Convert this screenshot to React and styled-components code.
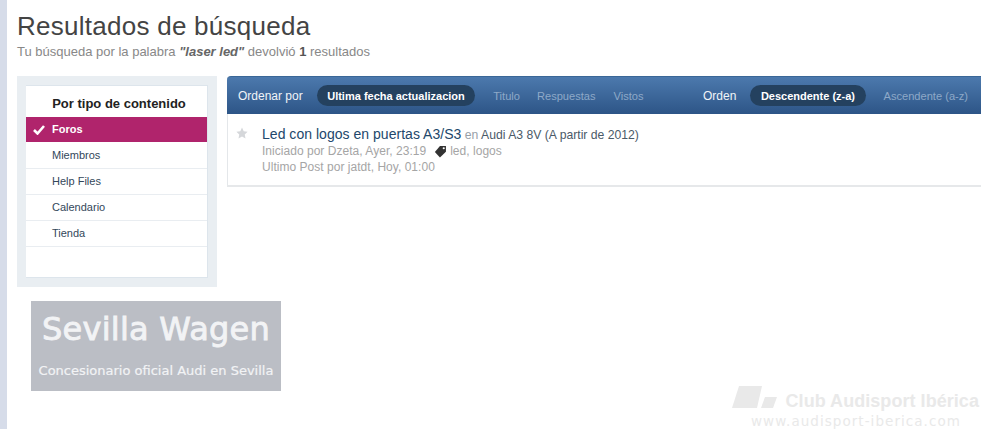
import React from "react";
import styled, { createGlobalStyle } from "styled-components";

const GlobalStyle = createGlobalStyle`
    html, body {
        margin: 0;
        padding: 0;
        background: #fff;
        overflow: hidden;
    }
    body {
        font-family: "Liberation Sans", Arial, sans-serif;
    }
`;

const Page = styled.div`
    position: relative;
    box-sizing: border-box;
    width: 981px;
    height: 429px;
    overflow: hidden;
    border-left: 7px solid #d6dce9;
    padding: 12px 0 0 10px;
`;

const Title = styled.h1`
    margin: 0;
    font-size: 26px;
    line-height: 28px;
    font-weight: 400;
    color: #444;
    letter-spacing: 0.26px;
`;

const Subtitle = styled.p`
    margin: 4px 0 0;
    font-size: 13px;
    line-height: 16px;
    color: #888;

    em {
        font-weight: 700;
        font-style: italic;
        color: #666;
    }
    strong {
        color: #555;
    }
`;

const Columns = styled.div`
    display: flex;
    gap: 10px;
    margin-top: 16px;
`;

const LeftColumn = styled.div`
    width: 200px;
    flex-shrink: 0;
`;

const SidebarFrame = styled.div`
    background: #e9eef2;
    padding: 9px;
    height: 211px;
    box-sizing: border-box;
`;

const Sidebar = styled.nav`
    box-sizing: border-box;
    height: 193px;
    background: #fff;
    border: 1px solid #dde5ec;
    border-left: 0;
`;

const SidebarTitle = styled.div`
    height: 31px;
    padding: 10px 0 0 5px;
    box-sizing: border-box;
    text-align: center;
    font-size: 13px;
    line-height: 15px;
    font-weight: 700;
    color: #222;
`;

const SidebarItem = styled.div`
    display: flex;
    align-items: center;
    box-sizing: border-box;
    height: ${(p) => (p.$active ? 25 : 26)}px;
    margin-bottom: ${(p) => (p.$active ? 1 : 0)}px;
    padding-left: 26px;
    padding-bottom: ${(p) => (p.$active ? 1 : 2)}px;
    font-size: 11px;
    color: ${(p) => (p.$active ? "#fff" : "#33475a")};
    font-weight: ${(p) => (p.$active ? 700 : 400)};
    background: ${(p) => (p.$active ? "#b0246c" : "transparent")};
    border-bottom: ${(p) => (p.$active ? "0" : "1px solid #e9edf1")};
    position: relative;
`;

const CheckIcon = styled.svg`
    position: absolute;
    left: 7px;
    top: 7px;
    width: 12px;
    height: 11px;
`;

const Banner = styled.div`
    box-sizing: border-box;
    width: 250px;
    height: 90px;
    margin: 14px 0 0 14px;
    background: #bbbec5;
    color: #f2f3f5;
    text-align: center;
`;

const BannerName = styled.div`
    padding-top: 10px;
    font-family: "DejaVu Sans", sans-serif;
    font-size: 32px;
    line-height: 36px;
    letter-spacing: 0.25px;
    white-space: nowrap;
    -webkit-text-stroke: 0.9px #f2f3f5;
`;

const BannerTagline = styled.div`
    margin-top: 16px;
    font-family: "DejaVu Sans", sans-serif;
    font-size: 13px;
    line-height: 16px;
    white-space: nowrap;
    -webkit-text-stroke: 0.2px #f2f3f5;
`;

const RightColumn = styled.main`
    flex: 1;
    min-width: 0;
`;

const SortBar = styled.div`
    display: flex;
    align-items: center;
    height: 38px;
    padding: 0 13px 0 11px;
    background: linear-gradient(#4c79ad, #2d5587);
    border-top: 1px solid #3a6797;
    box-sizing: border-box;
    border-radius: 4px 0 0 0;
`;

const SortLabel = styled.span`
    font-size: 12px;
    color: #f0f4f8;
    margin-right: ${(p) => p.$gap}px;
`;

const Pill = styled.span`
    display: flex;
    align-items: center;
    height: 21px;
    padding: 0 10.5px;
    border-radius: 11px;
    background: #24415f;
    color: #fff;
    font-size: 11px;
    font-weight: 700;
    white-space: nowrap;
`;

const SortLink = styled.span`
    font-size: 11.1px;
    color: #8ea9c8;
    margin-left: ${(p) => p.$gap}px;
    white-space: nowrap;
`;

const Spacer = styled.div`
    flex: 1;
`;

const ResultRow = styled.article`
    display: flex;
    box-sizing: border-box;
    height: 73px;
    background: #fff;
    border-left: 1px solid #e4e7ea;
    border-bottom: 2px solid #e6e8ea;
    padding: 12px 0 0 8px;
`;

const StarIcon = styled.svg`
    width: 12px;
    height: 12px;
    margin-top: 1px;
    flex-shrink: 0;
`;

const ResultBody = styled.div`
    margin-left: 14px;
`;

const ResultTitle = styled.div`
    font-size: 12.2px;
    line-height: 16px;
    color: #4a5a68;
    white-space: nowrap;

    a {
        font-size: 14px;
        letter-spacing: 0.03px;
        color: #22476b;
        text-decoration: none;
    }
    span {
        color: #98a0a8;
    }
`;

const MetaLine = styled.div`
    display: flex;
    align-items: center;
    font-size: 12px;
    line-height: 16px;
    letter-spacing: 0.03px;
    color: #a5a5a5;
    white-space: nowrap;
`;

const TagIcon = styled.svg`
    width: 13px;
    height: 13px;
    margin: 0 3px 0 8px;
`;

const Watermark = styled.div`
    position: absolute;
    right: 1px;
    bottom: 0;
    width: 248px;
    height: 44px;
    color: #e9e9e9;
`;

const WatermarkLogo = styled.svg`
    position: absolute;
    left: 0;
    top: 1px;
    width: 46px;
    height: 23px;
`;

const WatermarkName = styled.div`
    position: absolute;
    right: 1px;
    top: 6px;
    font-size: 18px;
    line-height: 20px;
    font-weight: 700;
    letter-spacing: 0.05px;
    white-space: nowrap;
`;

const WatermarkUrl = styled.div`
    position: absolute;
    left: 19px;
    top: 28px;
    font-family: "DejaVu Sans", sans-serif;
    font-size: 13.5px;
    line-height: 16px;
    letter-spacing: 1.05px;
    white-space: nowrap;
`;

const items = ["Miembros", "Help Files", "Calendario", "Tienda"];

const App = () => {
    return (
        <Page>
            <GlobalStyle />
            <Title>Resultados de búsqueda</Title>
            <Subtitle>
                Tu búsqueda por la palabra <em>"laser led"</em> devolvió <strong>1</strong> resultados
            </Subtitle>
            <Columns>
                <LeftColumn>
                    <SidebarFrame>
                        <Sidebar>
                            <SidebarTitle>Por tipo de contenido</SidebarTitle>
                            <SidebarItem $active>
                                <CheckIcon viewBox="0 0 12 11">
                                    <path d="M1 6l3.5 3.5L11 2" fill="none" stroke="#fff" strokeWidth="2.6" />
                                </CheckIcon>
                                Foros
                            </SidebarItem>
                            {items.map((item) => (
                                <SidebarItem key={item}>{item}</SidebarItem>
                            ))}
                        </Sidebar>
                    </SidebarFrame>
                    <Banner>
                        <BannerName>Sevilla Wagen</BannerName>
                        <BannerTagline>Concesionario oficial Audi en Sevilla</BannerTagline>
                    </Banner>
                </LeftColumn>
                <RightColumn>
                    <SortBar>
                        <SortLabel $gap={14}>Ordenar por</SortLabel>
                        <Pill>Ultima fecha actualizacion</Pill>
                        <SortLink $gap={18}>Titulo</SortLink>
                        <SortLink $gap={17}>Respuestas</SortLink>
                        <SortLink $gap={18}>Vistos</SortLink>
                        <Spacer />
                        <SortLabel $gap={14}>Orden</SortLabel>
                        <Pill>Descendente (z-a)</Pill>
                        <SortLink $gap={18}>Ascendente (a-z)</SortLink>
                    </SortBar>
                    <ResultRow>
                        <StarIcon viewBox="0 0 24 24">
                            <path d="M12 1l3.4 7.3 7.8 1-5.7 5.5 1.5 8L12 18.9 5 22.8l1.5-8L.8 9.3l7.8-1z" fill="#d5d7da" />
                        </StarIcon>
                        <ResultBody>
                            <ResultTitle>
                                <a href="#">Led con logos en puertas A3/S3</a> <span>en</span> Audi A3 8V (A partir de 2012)
                            </ResultTitle>
                            <MetaLine>
                                Iniciado por Dzeta, Ayer, 23:19
                                <TagIcon viewBox="0 0 12 12">
                                    <path d="M5.5 1h5.5v5.2L5.5 11.5.8 6.5z" fill="#333" />
                                    <circle cx="9" cy="3" r="1" fill="#fff" />
                                </TagIcon>
                                led, logos
                            </MetaLine>
                            <MetaLine>Ultimo Post por jatdt, Hoy, 01:00</MetaLine>
                        </ResultBody>
                    </ResultRow>
                </RightColumn>
            </Columns>
            <Watermark>
                <WatermarkLogo viewBox="0 0 46 23">
                    <path d="M7 0h23L25 22H0z" fill="#e9e9e9" />
                    <path d="M33 11h12l-4 11H29z" fill="#e9e9e9" />
                </WatermarkLogo>
                <WatermarkName>Club Audisport Ibérica</WatermarkName>
                <WatermarkUrl>www.audisport-iberica.com</WatermarkUrl>
            </Watermark>
        </Page>
    );
};

export default App;
